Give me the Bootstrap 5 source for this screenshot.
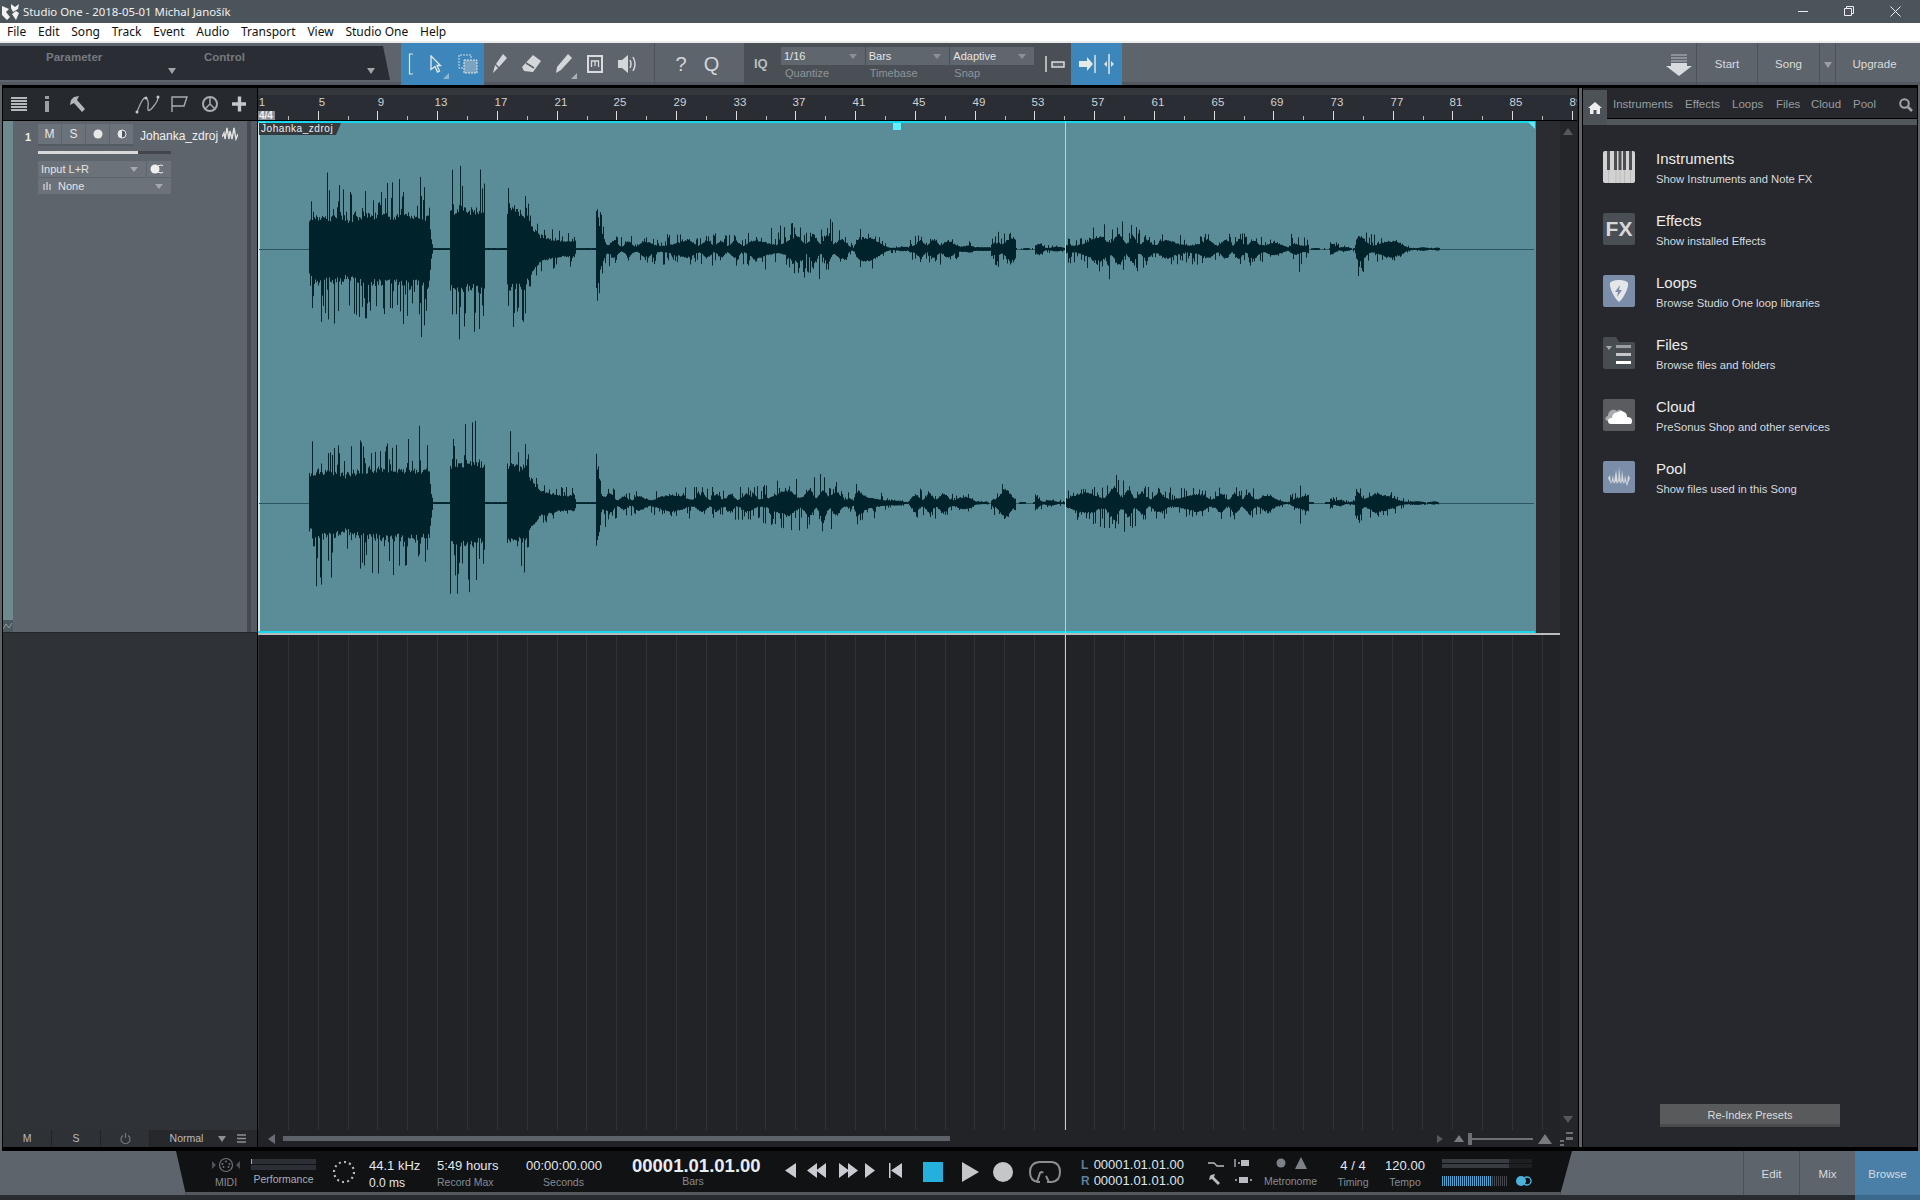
<!DOCTYPE html>
<html lang="en">
<head>
<meta charset="UTF-8">
<title>Studio One - 2018-05-01 Michal Janošík</title>
<link href="https://cdn.jsdelivr.net/npm/bootstrap@5.3.0/dist/css/bootstrap.min.css" rel="stylesheet">
<style>
body { background:#000; font-family:"Liberation Sans",Arial,sans-serif; font-size:11px; color:#ddd; overflow:hidden; }
svg { display:block; }
.s1-title { height:23px; flex:none; background:#4c545b; color:#f0f0f0; font:11.4px "Noto Sans",sans-serif; padding-left:2px; }
.s1-title .s1-name { margin-left:3px; }
.s1-winbtns span { width:46px; display:flex; justify-content:center; }
.s1-winbtns .s1-close { width:48px; padding:0 19px 0 18px; }
.s1-menu { height:20px; flex:none; background:#fff; border-bottom:2px solid #ececec; padding-left:2px; }
.s1-menu .nav-link { padding:0 5px; color:#111; font:12px/18px "Noto Sans",sans-serif; margin-right:1.8px; }
.s1-toolbar { height:42px; background:#5d646c; flex:none; box-shadow:inset 0 -3px 0 #52585f; }
.s1-param { width:390px; height:34px; margin:3px 11px 0 0; background:#2a2d33; clip-path:polygon(0 0,383px 0,100% 100%,0 100%); position:relative; color:#767a80; font-weight:bold; font-size:11.5px; }
.s1-param b { position:absolute; top:3px; }
.s1-caret { width:0; height:0; border-left:4.5px solid transparent; border-right:4.5px solid transparent; border-top:6px solid #a0a4a8; display:inline-block; }
.s1-param .s1-caret { position:absolute; top:22px; }
.s1-blue { background:#3c86bb; }
.s1-tool { flex:none; height:42px; display:flex; align-items:center; justify-content:center; position:relative; }
.s1-more { position:absolute; right:2px; bottom:6px; width:0; height:0; border-bottom:6px solid #a9b2b9; border-left:6px solid transparent; }
.s1-sep { border-right:1px solid #4c5258; }
.s1-iq { width:327px; height:42px; background:#4a4f56; padding-left:37px; position:relative; }
.s1-iqlabel { position:absolute; left:10px; top:13px; color:#b8bcc0; font:bold 13px "Liberation Sans",sans-serif; }
.s1-pick { width:84px; margin-right:1px; }
.s1-pick .s1-val { height:18px; margin-top:4px; background:#60666d; color:#e4e4e4; font-size:11px; line-height:18px; padding:0 8px 0 3px; }
.s1-pick .s1-val .s1-caret { border-top-color:#8c9096; border-left-width:4px; border-right-width:4px; border-top-width:5px; }
.s1-pick .s1-lbl { color:#8f9499; font-size:11px; padding:1px 0 0 4px; line-height:14px; }
.s1-toptab { height:42px; border-left:1px solid #4c5258; color:#dcdcdc; font-size:11.5px; line-height:42px; text-align:center; }
.s1-work { flex:1 1 auto; min-height:0; padding:3px 0 4px 0; background:#000; border-left:2px solid #5d646c; border-right:2px solid #5d646c; }
.s1-arr { width:1575px; margin-left:1px; background:#212327; flex:none; }
.s1-split { width:5px; flex:none; border-left:1px solid #000; border-right:1px solid #000; background:#5d646c; }
.s1-leftcol { width:255px; flex:none; background:#2f3237; border-right:1px solid #000; }
.s1-lhead { height:33px; background:#26292e; border-bottom:1px solid #000; flex:none; }
.s1-track { height:512px; flex:none; background:#5d646c; position:relative; border-bottom:1px solid #23262a; }
.s1-strip { width:10px; background:#6f8a8e; flex:none; position:relative; }
.s1-auto { position:absolute; left:0; bottom:0; width:10px; height:12px; background:#4a5a60; display:flex; align-items:center; justify-content:center; }
.s1-tail { width:10px; flex:none; background:#565c63; border-left:4px solid #464a50; margin-left:auto; }
.s1-trackbody { width:235px; padding:3px 0 0 12px; }
.s1-num { width:13px; color:#eee; font-size:11px; font-weight:bold; margin-top:5px; }
.s1-tbtn { width:23px; height:22px; margin-right:1px; background:#6c7279; border-bottom:2px solid #555b62; color:#e8e8e8; font-size:12px; display:flex; align-items:center; justify-content:center; }
.s1-tname { color:#f0f0f0; font-size:12px; margin-left:6px; white-space:nowrap; }
.s1-level { width:133px; height:3px; margin-top:5px; background:#43474d; }
.s1-level div { width:100px; height:3px; background:#d8d8d8; }
.s1-route { width:133px; height:16px; background:#6c7279; color:#e4e4e4; font-size:11px; line-height:16px; padding:0 8px 0 3px; }
.s1-route .s1-caret { border-top-color:#a4a8ac; border-left-width:4px; border-right-width:4px; border-top-width:5px; }
.s1-lbar { height:17px; flex:none; background:#26282c; color:#b8bcc0; font-size:10.5px; }
.s1-lbar span { height:17px; display:flex; align-items:center; justify-content:center; }
.s1-cell { background:#2e3136; border-right:1px solid #212327; }
.s1-timeline { width:1319px; flex:none; }
.s1-ruler { height:33px; flex:none; background:#000; }
.s1-canvas { width:1302px; position:relative; flex:none; }
.s1-rowwrap { height:512px; flex:none; background:#2a2c31; }
.s1-region { width:1278px; height:512px; position:relative; background:#5b8d99; border-right:1px solid #16a6b6; }
.s1-region svg { position:absolute; left:0; top:0; }
.s1-clip { position:absolute; left:1px; top:2px; width:82px; height:12px; background:#343b3f; color:#f2f2f2; font-size:10px; letter-spacing:.55px; line-height:12px; padding-left:2px; clip-path:polygon(0 0,100% 0,calc(100% - 5px) 100%,0 100%); }
.s1-mark { position:absolute; left:635px; top:2px; width:8px; height:7px; background:#5ff0ff; }
.s1-tri1,.s1-tri2 { position:absolute; top:1px; width:0; height:0; border-top:7px solid #5fe8f8; }
.s1-tri1 { left:1px; border-right:7px solid transparent; }
.s1-tri2 { right:0; border-left:7px solid transparent; }
.s1-regline { height:2px; flex:none; background:#b9bdc0; }
.s1-grid { flex:1 1 auto; min-height:0; background-color:#212327; background-image:repeating-linear-gradient(90deg,#2f3236 0,#2f3236 1px,transparent 1px,transparent 29.85px); }
.s1-play { position:absolute; left:807px; top:0; bottom:0; width:1px; background:#c6cacc; }
.s1-vscroll { width:17px; flex:none; background:#24262a; }
.s1-hthumb { width:667px; height:5px; background:#5d626a; flex:none; }
.s1-browser { width:334px; flex:none; background:#26282d; }
.s1-tabs { height:29px; margin-top:2px; border-bottom:1px solid #000; flex:none; color:#989da2; font-size:11px; position:relative; }
.s1-home { width:24px; height:35px; background:#4d5258; display:flex; align-items:center; justify-content:center; flex:none; position:relative; z-index:1; }
.s1-tabs .nav-link { padding:0; color:#989da2; position:absolute; top:7px; line-height:14px; font-size:11.5px; }
.s1-tabstrip { height:6px; background:#53585d; flex:none; }
.s1-list { padding:26px 0 0 20px; }
.s1-list .list-group-item { background:transparent; border:0; padding:0; height:62px; display:flex; color:#e6e6e6; }
.s1-bicon { width:32px; height:32px; border-radius:2px; flex:none; margin-right:21px; display:flex; align-items:center; justify-content:center; }
.s1-btitle { font-size:15px; line-height:17px; margin-top:-1px; font-weight:normal; color:#ececec; }
.s1-bsub { font-size:11.25px; line-height:14px; margin-top:5px; color:#d6dade; }
.s1-reindex { width:180px; height:23px; padding:0; background:#585a5c; border:0; border-bottom:3px solid #4a4c4e; border-radius:0; color:#dcdcdc; font-size:11px; line-height:22px; margin:0 0 20px 77px; }
.s1-transport { height:44px; flex:none; background:#5d646c; position:relative; }
.s1-black { width:1396px; height:44px; margin-left:176px; background:#111214; clip-path:polygon(0 0,100% 0,calc(100% - 12px) 100%,10px 100%); box-shadow:inset 0 -3px 0 #55595e; flex:none; }
.s1-tc { flex:none; text-align:left; white-space:nowrap; }
.s1-v { color:#e2e8ee; font-size:13px; line-height:15px; margin-top:7px; }
.s1-l { color:#868c92; font-size:10.5px; line-height:12px; margin-top:3px; }
.s1-big { color:#e6ecf2; font-size:18.5px; font-weight:bold; line-height:20px; margin-top:5px; }
.s1-bar { height:5px; margin-bottom:1px; background:#2c3036; }
.s1-page { height:44px; border-left:1px solid #4c5258; color:#d8dcdf; font-size:11.5px; line-height:46px; text-align:center; flex:none; }
.s1-foot { height:5px; flex:none; background:#282b2f; }
.s1-footb { width:65px; background:#3c6a8c; }
</style>
</head>
<body class="m-0 vh-100 d-flex flex-column">

<div class="s1-title d-flex align-items-center">
  <svg width="18" height="17" viewBox="0 0 18 17"><path d="M0 3l7 3-3 3 4 5-3 3-5-5zM9 1l4 3 4-3-1 5-5 3-2-4zM10 11l4-3 3 2-3 7z" fill="#f2f2f2"/></svg>
  <span class="s1-name">Studio One - 2018-05-01 Michal Janošík</span>
  <div class="s1-winbtns d-flex ms-auto">
    <span><svg width="10" height="10"><path d="M0 5.500h10" stroke="#eee"/></svg></span>
    <span><svg width="10" height="10"><path d="M.5 2.500h7v7h-7zM2.500 2.500v-2h7v7h-2" fill="none" stroke="#eee"/></svg></span>
    <span class="s1-close"><svg width="11" height="11"><path d="M.5.5l10 10M10.500.5l-10 10" stroke="#eee"/></svg></span>
  </div>
</div>

<div class="s1-menu nav">
  <a class="nav-link" href="#">File</a><a class="nav-link" href="#">Edit</a><a class="nav-link" href="#">Song</a><a class="nav-link" href="#">Track</a><a class="nav-link" href="#">Event</a><a class="nav-link" href="#">Audio</a><a class="nav-link" href="#">Transport</a><a class="nav-link" href="#">View</a><a class="nav-link" href="#">Studio One</a><a class="nav-link" href="#">Help</a>
</div>

<div class="s1-toolbar d-flex">
  <div class="s1-param"><b style="left:46px">Parameter</b><b style="left:204px">Control</b><i class="s1-caret" style="left:168px"></i><i class="s1-caret" style="left:367px"></i></div>
  <div class="s1-blue d-flex" style="width:83px">
    <div class="s1-tool" style="width:20px"><svg width="6" height="22"><path d="M5 1H1.500v20H5" fill="none" stroke="#dfe6ea" stroke-width="1.200"/></svg></div>
    <div class="s1-tool" style="width:30px"><svg width="14" height="18" viewBox="0 0 14 18"><path d="M2 1l9.500 9.500H8l2.500 5.500-2 1L6 11.500 2 14.500z" fill="#3c86bb" stroke="#e6eaec" stroke-width="1.300"/></svg><i class="s1-more" style="border-bottom-color:#8fb6d3"></i></div>
    <div class="s1-tool" style="width:33px"><svg width="20" height="20" viewBox="0 0 20 20"><path d="M5 14H1V1h12v4" fill="none" stroke="#d8dde0" stroke-dasharray="2 1"/><rect x="6" y="6" width="13" height="13" fill="#7aa4c2" stroke="#e4e8ea" stroke-dasharray="2 1"/></svg></div>
  </div>
  <div class="d-flex s1-sep" style="width:171px">
    <div class="s1-tool" style="width:31px"><svg width="16" height="20" viewBox="0 0 16 20"><path d="M11 0l4 4-8 9-3-3zM3 11l3 3-5 5z" fill="#d4d7da"/></svg></div>
    <div class="s1-tool" style="width:33px"><svg width="20" height="18" viewBox="0 0 20 18"><path d="M11 0l8 6-8 11-9-1-2-4z" fill="#d4d7da"/><path d="M4 8l8 5" stroke="#5d646c" stroke-width="1.500"/></svg></div>
    <div class="s1-tool" style="width:31px"><svg width="18" height="20" viewBox="0 0 18 20"><path d="M13 0l4 4L6 16l-5 3 1-6z" fill="#d4d7da"/></svg><i class="s1-more"></i></div>
    <div class="s1-tool" style="width:32px"><svg width="16" height="18"><path d="M1 1h14v16H1z" fill="none" stroke="#d8dbde" stroke-width="2"/><path d="M4.500 12V6h7v6M8 6v5" fill="none" stroke="#d8dbde" stroke-width="1.300"/></svg></div>
    <div class="s1-tool" style="width:32px"><svg width="20" height="20" viewBox="0 0 20 20"><path d="M1 6h4l6-5v18l-6-5H1z" fill="#d4d7da"/><path d="M13 6q2 4 0 8M16 3q4 7 0 14" fill="none" stroke="#d4d7da" stroke-width="1.500"/></svg></div>
  </div>
  <div class="d-flex" style="width:89px;padding-left:11px">
    <div class="s1-tool" style="width:30px;color:#d4d7da;font-size:20px">?</div>
    <div class="s1-tool" style="width:31px;color:#d4d7da;font-size:20px">Q</div>
  </div>
  <div class="s1-iq d-flex">
    <div class="s1-iqlabel">IQ</div>
    <div class="s1-pick"><div class="s1-val d-flex justify-content-between align-items-center">1/16<i class="s1-caret"></i></div><div class="s1-lbl">Quantize</div></div>
    <div class="s1-pick"><div class="s1-val d-flex justify-content-between align-items-center">Bars<i class="s1-caret"></i></div><div class="s1-lbl">Timebase</div></div>
    <div class="s1-pick"><div class="s1-val d-flex justify-content-between align-items-center">Adaptive<i class="s1-caret"></i></div><div class="s1-lbl">Snap</div></div>
    <div class="s1-tool" style="width:36px"><svg width="24" height="24"><path d="M5 4v16" stroke="#d8dbde" stroke-width="1.500"/><rect x="11" y="10" width="12" height="5" fill="#5d646c" stroke="#d8dbde" stroke-width="1.500"/></svg></div>
  </div>
  <div class="s1-blue d-flex" style="width:51px">
    <div class="s1-tool" style="width:31px"><svg width="20" height="24" viewBox="0 0 20 24"><path d="M2 9h8V5l6 7-6 7v-4H2z" fill="#e6e9ec"/><path d="M18 3v18" stroke="#dfe4e8" stroke-width="1.500"/></svg></div>
    <div class="s1-tool" style="width:14px"><svg width="12" height="24" viewBox="0 0 12 24"><path d="M6 2v20" stroke="#dfe4e8" stroke-width="1.500"/><path d="M4 9v6l-3-3zM8 9v6l3-3z" fill="#dfe4e8"/></svg></div>
  </div>
  <div class="d-flex ms-auto">
    <div class="s1-tool" style="width:36px;margin-right:-1px"><svg width="26" height="25" viewBox="0 0 26 25"><path d="M5 2h16v2H5zM5 5h16v2H5zM5 8h16v2H5z" fill="#8d9298"/><path d="M5 11h16v3h5L13 24 0 14h5z" fill="#d8dbde"/></svg></div>
    <div class="s1-toptab" style="width:61px">Start</div>
    <div class="s1-toptab" style="width:62px">Song</div>
    <div class="s1-toptab" style="width:16px"><i class="s1-caret" style="border-top-color:#9ca0a4"></i></div>
    <div class="s1-toptab" style="width:85px;padding-right:7px">Upgrade</div>
  </div>
</div>

<div class="s1-work d-flex">
  <div class="s1-arr d-flex">
    <div class="s1-leftcol d-flex flex-column">
      <div class="s1-lhead d-flex align-items-center" style="padding-left:8px">
        <svg width="235" height="20" viewBox="0 0 235 20">
          <g fill="#b4b8bc"><rect x="0" y="3" width="16" height="2"/><rect x="0" y="6" width="16" height="2"/><rect x="0" y="9" width="16" height="2"/><rect x="0" y="12" width="16" height="2"/><rect x="0" y="15" width="16" height="2"/></g>
          <path d="M34 2h4v3h-4zM34 7h4v11h-4z" fill="#9ca0a4"/>
          <path d="M62 3l5-1-2 4 8 9-3 3-8-9-4 2 1-5z" fill="#b4b8bc" transform="translate(1 0)"/>
          <path d="M126 18q6-16 9-14t2 9 5 0 5-11" fill="none" stroke="#a8acb0" stroke-width="1.300"/><circle cx="126" cy="18" r="1.500" fill="#c4c8cc"/><circle cx="135" cy="4" r="1.500" fill="#c4c8cc"/><circle cx="147" cy="3" r="1.500" fill="#c4c8cc"/>
          <path d="M161 18V3h15l-3 9h-12" fill="none" stroke="#a8acb0" stroke-width="1.400"/>
          <circle cx="199" cy="10" r="7" fill="none" stroke="#a8acb0" stroke-width="2"/><path d="M199 3v7l-5 5M199 10l5 5" stroke="#a8acb0" stroke-width="1.500" fill="none"/>
          <path d="M221 10h15M228.500 2.500v15" stroke="#c4c8cc" stroke-width="3.400"/>
        </svg>
      </div>
      <div class="s1-track d-flex">
        <div class="s1-strip"><div class="s1-auto"><svg width="10" height="8"><path d="M0 7l3-5 3 4 3-5" fill="none" stroke="#8c9a9e"/></svg></div></div>
        <div class="s1-trackbody">
          <div class="d-flex">
            <div class="s1-num">1</div>
            <div class="s1-tbtn">M</div><div class="s1-tbtn">S</div>
            <div class="s1-tbtn"><svg width="10" height="10"><circle cx="5" cy="5" r="4.500" fill="#e8e8e8"/></svg></div>
            <div class="s1-tbtn"><svg width="10" height="10"><circle cx="5" cy="5" r="4" fill="#4f555c" stroke="#e8e8e8"/><path d="M5 1a4 4 0 0 0 0 8z" fill="#e8e8e8"/></svg></div>
            <div class="s1-tname" style="margin-top:3px">Johanka_zdroj</div>
            <svg class="ms-1" width="16" height="14" viewBox="0 0 16 14" style="margin-top:3px"><path d="M0 10l2-4 1 6 2-11 2 11 1-8 2 8 2-11 2 11 2-5" fill="none" stroke="#e0e0e0" stroke-width="1.400"/></svg>
          </div>
          <div style="margin-left:13px">
            <div class="s1-level"><div></div></div>
            <div class="d-flex" style="margin-top:7px">
              <div class="s1-route d-flex justify-content-between align-items-center" style="width:108px">Input L+R<i class="s1-caret"></i></div>
              <div class="s1-route d-flex align-items-center justify-content-center" style="width:24px;margin-left:1px"><svg width="16" height="10"><circle cx="11" cy="5" r="4" fill="#6c7279" stroke="#eee"/><circle cx="5" cy="5" r="4.500" fill="#eee"/></svg></div>
            </div>
            <div class="s1-route d-flex align-items-center" style="margin-top:1px">
              <svg width="8" height="8" style="margin:0 7px 0 2px"><path d="M1 2v6M4 0v8M7 2v6" stroke="#c4c8cc" stroke-width="1.500"/></svg>None<i class="s1-caret ms-auto"></i>
            </div>
          </div>
        </div>
        <div class="s1-tail"></div>
      </div>
      <div class="flex-grow-1"></div>
      <div class="s1-lbar d-flex">
        <span class="s1-cell" style="width:49px">M</span><span class="s1-cell" style="width:49px">S</span>
        <span class="s1-cell" style="width:49px"><svg width="11" height="12"><path d="M5.500 0v5M3 2.500a4.500 4.500 0 1 0 5 0" fill="none" stroke="#73777c" stroke-width="1.200"/></svg></span>
        <span style="width:62px;padding-left:11px">Normal</span>
        <span style="width:20px"><i class="s1-caret" style="border-top-color:#8c9096"></i></span>
        <span style="width:18px"><svg width="9" height="9"><path d="M0 1h9M0 4.500h9M0 8h9" stroke="#8c9096" stroke-width="1.500"/></svg></span>
      </div>
    </div>
    <div class="s1-timeline d-flex flex-column">
      <svg id="ruler" class="s1-ruler" width="1319" height="33" viewBox="0 0 1319 33"></svg>
      <div class="d-flex flex-grow-1" style="min-height:0">
        <div class="s1-canvas d-flex flex-column">
          <div class="s1-rowwrap d-flex">
            <div class="s1-region">
              <svg id="wave" width="1277" height="512" viewBox="0 0 1277 512"></svg>
              <div class="s1-tri1"></div><div class="s1-tri2"></div>
              <div class="s1-clip">Johanka_zdroj</div>
              <div class="s1-mark"></div>
            </div>
          </div>
          <div class="s1-regline"></div>
          <div class="s1-grid"></div>
          <div class="s1-play"></div>
        </div>
        <div class="s1-vscroll d-flex flex-column align-items-center">
          <svg width="11" height="10" style="margin-top:6px"><path d="M0 8l5-7 5 7z" fill="#55595f"/></svg>
          <svg width="11" height="10" class="mt-auto" style="margin-bottom:5px"><path d="M0 1l5 7 5-7z" fill="#55595f"/></svg>
        </div>
      </div>
      <div class="s1-lbar d-flex align-items-center" style="padding-left:10px;background:#212327">
        <svg width="8" height="10" style="flex:none"><path d="M7 0v10L0 5z" fill="#6a6e74"/></svg>
        <div class="s1-hthumb" style="margin-left:7px"></div>
        <svg class="ms-auto" width="142" height="17" viewBox="0 0 142 17" style="flex:none">
          <path d="M2 5v8l6-4z" fill="#55595f"/>
          <path d="M19 12l5-7 5 7z" fill="#777b80"/>
          <rect x="33" y="3" width="4" height="12" fill="#6c7076"/><rect x="37" y="8" width="61" height="2" fill="#6c7076"/>
          <path d="M103 14l7-10 7 10z" fill="#777b80"/>
          <path d="M125 10h4v2h-4zM125 14h4v2h-4zM131 2h7v2h-7zM131 7h7v3h-7z" fill="#6c7076"/>
        </svg>
      </div>
    </div>
  </div>
  <div class="s1-split"></div>

  <div class="s1-browser d-flex flex-column">
    <div class="s1-tabs d-flex">
      <div class="s1-home"><svg width="14" height="12" viewBox="0 0 14 12"><path d="M7 0l7 6h-2v6H8.500V8h-3v4H2V6H0z" fill="#eee"/></svg></div>
      <a class="nav-link" href="#" style="left:30px">Instruments</a>
      <a class="nav-link" href="#" style="left:102px">Effects</a>
      <a class="nav-link" href="#" style="left:149px">Loops</a>
      <a class="nav-link" href="#" style="left:193px">Files</a>
      <a class="nav-link" href="#" style="left:228px">Cloud</a>
      <a class="nav-link" href="#" style="left:270px">Pool</a>
      <svg width="14" height="14" viewBox="0 0 14 14" class="ms-auto" style="margin:8px 4px 0 0"><circle cx="5.500" cy="5.500" r="4.300" fill="none" stroke="#a0a4a8" stroke-width="2"/><path d="M9 9l4 4" stroke="#a0a4a8" stroke-width="2.500"/></svg>
    </div>
    <div class="s1-tabstrip"></div>
    <div class="s1-list list-group list-group-flush flex-grow-1">
      <div class="list-group-item">
        <div class="s1-bicon" style="background:#d2d2d2"><svg width="32" height="32" viewBox="0 0 32 32"><path d="M4 0h3v19H4zM11 0h3v19h-3zM15.500 0h3v19h-3zM20 0h3v19h-3zM26 0h3v19h-3z" fill="#4a4d52"/><path d="M5.500 19v13M13 19v13M17 19v13M21.500 19v13M27.500 19v13" stroke="#bcbcbc"/></svg></div>
        <div><div class="s1-btitle">Instruments</div><div class="s1-bsub">Show Instruments and Note FX</div></div>
      </div>
      <div class="list-group-item">
        <div class="s1-bicon fw-bold" style="background:#4a4f56;color:#d8d8d8;font-size:21px">FX</div>
        <div><div class="s1-btitle">Effects</div><div class="s1-bsub">Show installed Effects</div></div>
      </div>
      <div class="list-group-item">
        <div class="s1-bicon" style="background:#7b8da8"><svg width="20" height="22" viewBox="0 0 20 22"><path d="M10 0c4 0 8 1 9 3 1 4-4 15-9 19C5 18 0 7 1 3c1-2 5-3 9-3z" fill="#e4e6ea"/><path d="M11 5L6 12h3l-1 5 5-7h-3z" fill="#7b8da8"/></svg></div>
        <div><div class="s1-btitle">Loops</div><div class="s1-bsub">Browse Studio One loop libraries</div></div>
      </div>
      <div class="list-group-item">
        <div class="s1-bicon" style="background:transparent"><svg width="32" height="32" viewBox="0 0 32 32"><path d="M2 0h11l3 5h14q2 0 2 2v23q0 2-2 2H2q-2 0-2-2V2q0-2 2-2z" fill="#484c53"/><path d="M3 9h6l-3 4z" fill="#a8acb0"/><rect x="13" y="8" width="15" height="3" fill="#9c9fa3"/><rect x="13" y="16" width="15" height="3" fill="#c4c6c8"/><rect x="13" y="24" width="15" height="3" fill="#fff"/></svg></div>
        <div><div class="s1-btitle">Files</div><div class="s1-bsub">Browse files and folders</div></div>
      </div>
      <div class="list-group-item">
        <div class="s1-bicon" style="background:#5a5c60"><svg width="28" height="18" viewBox="0 0 28 18"><path d="M3 15c-4 0-3-5 0-5 0-5 5-8 9-5 3-3 6 0 6 2" fill="#a8acb0"/><path d="M6 18q-3 0-3-3t4-3q0-5 6-6 3-2 6 0 3 1 3 5 5 0 5 4t-3 3z" fill="#fff"/></svg></div>
        <div><div class="s1-btitle">Cloud</div><div class="s1-bsub">PreSonus Shop and other services</div></div>
      </div>
      <div class="list-group-item">
        <div class="s1-bicon" style="background:#7b8da8"><svg width="24" height="20" viewBox="0 0 24 20"><path d="M1 11l2-3 1 9 2-9 1 8 2-13 2 13 1-16 2 16 1-13 2 13 1-8 2 9 1-9 2 3-2 5-1 3-2-5-1 3-2-3-1 3-2-3-2 3-1-3-2 3-1-3-2 3z" fill="#d8dade"/></svg></div>
        <div><div class="s1-btitle">Pool</div><div class="s1-bsub">Show files used in this Song</div></div>
      </div>
    </div>
    <button class="btn btn-secondary s1-reindex" type="button">Re-Index Presets</button>
  </div>
</div>

<div class="s1-transport d-flex">
  <div class="s1-black d-flex">
    <div class="s1-tc text-center" style="margin-left:34px;width:32px">
      <svg width="32" height="18" viewBox="0 0 32 18" style="margin-top:5px"><circle cx="16" cy="9" r="6.500" fill="none" stroke="#6c7278" stroke-width="1.200"/><g fill="#6c7278"><circle cx="12.500" cy="8" r="1"/><circle cx="19.500" cy="8" r="1"/><circle cx="16" cy="5.500" r="1"/><circle cx="13.500" cy="11" r="1"/><circle cx="18.500" cy="11" r="1"/></g><path d="M2 5v8l4-4zM30 5v8l-4-4z" fill="#4d5258"/></svg>
      <div class="s1-l" style="margin-top:2px">MIDI</div>
    </div>
    <div class="s1-tc" style="margin-left:9px;width:65px;padding-top:8px">
      <div class="s1-bar"><div style="width:1px;height:5px;background:#6bc4e8"></div></div><div class="s1-bar"></div>
      <div class="s1-l text-center" style="margin-top:3px;color:#a8aeb6">Performance</div>
    </div>
    <div class="s1-tc" style="margin-left:16px;width:24px;padding-top:9px">
      <svg width="24" height="24" viewBox="0 0 24 24"><circle cx="12" cy="12" r="10" fill="none" stroke="#b8bcc0" stroke-width="2.200" stroke-dasharray="2 3.200"/></svg>
    </div>
    <div class="s1-tc" style="margin-left:13px;width:68px"><div class="s1-v">44.1 kHz</div><div class="s1-v" style="margin-top:3px;font-size:12px">0.0 ms</div></div>
    <div class="s1-tc" style="width:89px"><div class="s1-v">5:49 hours</div><div class="s1-l">Record Max</div></div>
    <div class="s1-tc text-center" style="width:75px;margin-right:31px"><div class="s1-v">00:00:00.000</div><div class="s1-l">Seconds</div></div>
    <div class="s1-tc text-center" style="width:128px;margin-right:25px"><div class="s1-big">00001.01.01.00</div><div class="s1-l" style="margin:-1px 6px 0 0">Bars</div></div>
    <svg width="276" height="30" viewBox="0 0 276 30" style="margin-top:6px;flex:none">
      <g fill="#c8ccd0">
        <path d="M11 6v15L0 13.500z"/>
        <path d="M32 6v15l-10-7.500zM41 6v15l-10-7.500z"/>
        <path d="M54 6v15l10-7.500zM63 6v15l10-7.500z"/>
        <path d="M80 6v15l10-7.500z"/>
        <path d="M104 6h1.500v15H104zM117 6v15l-11-7.500z"/>
      </g>
      <rect x="138" y="5" width="20" height="20" fill="#25afdc"/>
      <path d="M177 5l17 10-17 10z" fill="#c4c6c8"/>
      <circle cx="218" cy="15" r="10" fill="#c4c6c8"/>
      <path d="M255 25h-2q-8-1-8-10t9-10h13q8 1 8 10t-8 10h-5M252 25l3-9q2-2 3 0M264 25l-3-6" fill="none" stroke="#8a8e92" stroke-width="2"/>
    </svg>
    <div class="s1-tc d-flex" style="margin-left:20px;width:103px">
      <div class="fw-bold" style="width:14px;color:#5c7f9c;font-size:12px;line-height:16px;padding-top:6px">L<br>R</div>
      <div class="s1-v" style="line-height:16px;margin-top:6px;color:#dde6ee">00001.01.01.00<br>00001.01.01.00</div>
    </div>
    <svg width="44" height="36" viewBox="0 0 44 36" style="margin:5px 0 0 24px;flex:none">
      <g fill="none" stroke="#b8bcc0" stroke-width="1.300"><path d="M0 7h6l3 3h7"/><path d="M27 3v8M30 7h2"/><path d="M27 24h2M42 24h2"/></g>
      <rect x="33" y="4" width="8" height="6" fill="#b8bcc0"/><rect x="31" y="21" width="9" height="6" fill="#b8bcc0"/>
      <path d="M3 19l4-1-1 3 6 6-2 2-6-6-3 1 1-4z" fill="#b8bcc0"/>
    </svg>
    <div class="s1-tc text-center" style="margin-left:11px;width:55px">
      <svg class="mx-auto" width="34" height="14" viewBox="0 0 34 14" style="margin-top:5px"><circle cx="7" cy="7" r="4.500" fill="#7c8288"/><path d="M27 1l6 12H21z" fill="#7c8288"/></svg>
      <div class="s1-l" style="margin-top:5px">Metronome</div>
    </div>
    <div class="s1-tc text-center" style="margin-left:10px;width:50px"><div class="s1-v">4 / 4</div><div class="s1-l">Timing</div></div>
    <div class="s1-tc text-center" style="margin-left:2px;width:50px"><div class="s1-v">120.00</div><div class="s1-l">Tempo</div></div>
    <div class="s1-tc" style="margin-left:12px;width:90px;padding-top:8px">
      <div style="height:4px;margin-bottom:1px;background:#1d1f23"><div style="width:67px;height:4px;background:#383c42"></div></div>
      <div style="height:4px;background:#1d1f23"><div style="width:67px;height:4px;background:#383c42"></div></div>
      <div class="d-flex align-items-center justify-content-between" style="margin-top:8px">
        <svg width="66" height="10"><defs><pattern id="stripe" width="2" height="10" patternUnits="userSpaceOnUse"><rect width="1" height="10" fill="#4aa8d4"/></pattern><pattern id="stripe2" width="2" height="10" patternUnits="userSpaceOnUse"><rect width="1" height="10" fill="#43474c"/></pattern></defs><rect width="50" height="10" fill="url(#stripe)"/><rect x="50" width="16" height="10" fill="url(#stripe2)"/></svg>
        <svg width="16" height="10"><circle cx="11" cy="5" r="4" fill="#111214" stroke="#4ab0dc" stroke-width="1.500"/><circle cx="5" cy="5" r="5" fill="#4ab0dc"/></svg>
      </div>
    </div>
  </div>
  <div class="d-flex ms-auto">
    <div class="s1-page" style="width:56px">Edit</div>
    <div class="s1-page" style="width:56px">Mix</div>
    <div class="s1-page" style="width:65px;background:#4a80a8;border-left:0">Browse</div>
  </div>
</div>
<div class="s1-foot d-flex justify-content-end"><div class="s1-footb"></div></div>

<script>
// ruler: numbers every 4 bars, a small tick half way
var barW = 59.72, ruler = '<rect width="1319" height="7" fill="#34383d"/><rect y="7" width="1319" height="25" fill="#2a2d33"/>';
for (var i = 0; i < 23; i++) {
  var x = Math.round(i * barW);
  ruler += '<rect x="' + x + '" y="23" width="1" height="9" fill="#dcdcdc"/>';
  ruler += '<rect x="' + Math.round(x + barW / 2) + '" y="28" width="1" height="4" fill="#b8b8b8"/>';
  ruler += '<text x="' + (x + 4) + '" y="18" fill="#cfd2d4" font-size="11.5" text-anchor="middle" font-family="Liberation Sans">' + (1 + i * 4) + '</text>';
}
ruler += '<rect y="23" width="17" height="9" fill="#8a8d90"/><text x="1" y="31" fill="#f0f0f0" font-size="10" font-weight="bold" font-family="Liberation Sans">4/4</text>';
ruler += '<rect y="32" width="1319" height="1" fill="#000"/>';
document.getElementById('ruler').innerHTML = ruler;

// rough waveform envelope [x, core, peak], screen pixels
var env = [[309,28,48],[316,34,80],[335,34,74],[345,30,56],[360,36,66],[400,36,70],[422,36,86],[429,34,56],[431,10,14],[433,1,1],[449,1,1],[450,42,88],[484,42,84],[485,1,1],[506,1,1],[507,42,88],[526,38,68],[531,25,32],[540,13,22],[560,8,18],[574,8,20],[576,1,1],[595,1,1],[596,46,56],[600,22,38],[606,12,20],[620,7,12],[660,8,15],[700,9,16],[750,9,16],[790,13,26],[830,15,30],[848,8,12],[853,3,3],[856,13,22],[875,11,18],[890,3,4],[908,2,2],[910,8,13],[925,10,15],[945,10,15],[950,8,11],[968,6,9],[975,2,2],[990,2,2],[992,8,13],[1002,14,20],[1015,12,15],[1016,1,1],[1034,1,1],[1035,7,9],[1045,3,4],[1064,2,3],[1066,8,13],[1090,11,20],[1115,17,32],[1148,10,16],[1200,9,15],[1250,10,16],[1270,8,10],[1288,2,2],[1294,10,30],[1308,8,11],[1309,1,1],[1329,1,1],[1330,6,9],[1345,2,3],[1354,2,3],[1356,15,32],[1370,10,15],[1395,8,11],[1410,2,2],[1438,1.5,1.5],[1440,.5,.5]];
var seed = 7;
function rnd() { seed = (seed * 16807) % 2147483647; return seed / 2147483647; }
function ampAt(x) {
  for (var i = 1; i < env.length; i++) {
    if (x <= env[i][0]) {
      var a = env[i - 1], b = env[i], t = (x - a[0]) / (b[0] - a[0]);
      return [a[1] + (b[1] - a[1]) * t, a[2] + (b[2] - a[2]) * t];
    }
  }
  return [0, 0];
}
function side(x, scale, phase) {
  var a = ampAt(x), r = rnd(), v = a[0] * (.8 + rnd() * .2);
  // slow wobble so the quiet part does not look like a smooth tube
  if (x > 600) v *= .72 + .32 * Math.sin(x * .29 + phase + 3 * Math.sin(x * .061));
  if (r > .97) v = a[1];
  else if (r > .6) v = v + (a[1] - v) * Math.pow(rnd(), 1.9);
  return v * scale;
}
function channel(cy, scale, phase) {
  var d = '';
  for (var x = 309; x < 1440; x++) {
    var up = side(x, scale, phase), down = side(x, scale * 1.04, phase);
    if (up + down < 1.5) continue;
    d += 'M' + (x - 258 + .5) + ' ' + (cy - up).toFixed(1) + 'V' + (cy + down).toFixed(1);
  }
  return '<rect x="1" y="' + cy + '" width="1275" height="1" fill="#2b5660"/><path d="' + d + '" stroke="#00222a" stroke-width="1" fill="none"/>';
}
document.getElementById('wave').innerHTML =
  '<rect width="2" height="512" fill="#cfe6ea"/><rect width="1278" height="2" fill="#19d6ec"/><rect y="510" width="1278" height="2" fill="#19d6ec"/>' +
  channel(128, 1, 0) + channel(382, 1, 2);
</script>
<script src="https://cdn.jsdelivr.net/npm/bootstrap@5.3.0/dist/js/bootstrap.bundle.min.js"></script>
</body>
</html>
